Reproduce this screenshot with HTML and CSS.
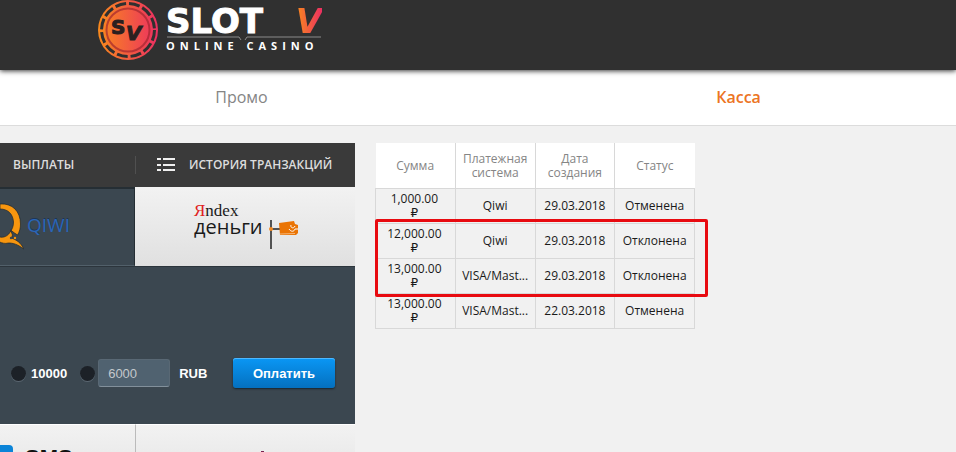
FILE: index.html
```html
<!DOCTYPE html>
<html lang="ru">
<head>
  <meta charset="UTF-8">
  <title>Касса</title>
  <meta name="viewport" content="width=device-width, initial-scale=1.0">
  <link rel="stylesheet" href="styles.css">
</head>
<body>

  <header class="header">
    <a class="logo" href="#">
      <svg class="logo-chip" viewBox="0 0 62 62" width="62" height="62">
        <defs>
          <linearGradient id="chip" x1="0" y1="0" x2="1" y2="0">
            <stop offset="0" stop-color="#f98a1c"/>
            <stop offset="1" stop-color="#ec2f62"/>
          </linearGradient>
        </defs>
        <circle cx="31" cy="30" r="30" fill="url(#chip)"/>
        <circle cx="31" cy="30" r="26.5" fill="none" stroke="#303030" stroke-width="3" stroke-dasharray="10.9 3"/>
        <circle cx="31" cy="30" r="21.5" fill="none" stroke="#a3262f" stroke-opacity="0.7" stroke-width="2"/>
        <text class="chip-letter" x="14" y="34" font-size="20">S</text>
        <text class="chip-letter" x="29" y="40" font-size="20" font-style="italic">V</text>
      </svg>
      <span class="logo-text">
        <span class="logo-name"><span>SLOT</span><span class="logo-v">V</span></span>
        <svg class="logo-line" viewBox="0 0 154 5" height="5">
          <path d="M0 1H72l2 3M154 1H80l-2 3" fill="none" stroke="#8a8a8a"/>
        </svg>
        <span class="logo-sub">ONLINE CASINO</span>
      </span>
    </a>
  </header>

  <nav class="nav">
    <div class="nav-list">
      <a href="#">Промо</a>
      <a class="active" href="#">Касса</a>
    </div>
  </nav>

  <main class="content">
    <section class="cashier">
      <div class="tabs">
        <a class="tab" href="#">ВЫПЛАТЫ</a>
        <a class="tab tab-history" href="#">
          <svg width="18" height="14" viewBox="0 0 18 14">
            <path d="M0 1h4M6 1h12M0 7h4M6 7h12M0 12h4M6 12h12" stroke="#f0f0f0" stroke-width="2"/>
          </svg>
          ИСТОРИЯ ТРАНЗАКЦИЙ
        </a>
      </div>

      <div class="methods">
        <button class="method method-active" type="button">
          <svg width="25" height="48" viewBox="0 0 25 48">
            <path d="M0 1C12 0 20.500 8 20.500 21c0 4-1 8-3 11l-3-2-4-3 2 5-1 3c5 2 10 5 12 11-6-5-11-6-15-6-4 1-6 0-9-1v-5c4 1 8-1 10-4 3-4 4-7 4-11C13 11 8 6 0 6z" fill="#f7960f" stroke="#1d2830" stroke-width="0.700"/>
            <circle cx="11" cy="35" r="1.200" fill="#3b4750"/>
            <circle cx="15" cy="35" r="1.200" fill="#f7960f"/>
          </svg>
          <span class="qiwi">QIWI</span>
        </button>
        <button class="method method-yandex" type="button">
          <span class="yandex">
            <span class="yandex-name"><span class="ya">Я</span>ndex</span>
            <span class="yandex-money">деньги</span>
          </span>
          <svg width="30" height="30" viewBox="0 0 30 30">
            <path d="M3 0v29M3 9h9" fill="none" stroke="#222" stroke-width="1.500"/>
            <circle cx="3" cy="9" r="2" fill="#f08a24"/>
            <path d="M11 3l15-2 1 3 3 1v8l-2 2H12z" fill="#ea7404"/>
            <path d="M12 14l15-.500" stroke="#f6b677"/>
            <path d="M23 5c-1 3 3 4 4 1M21 9c2 3 5 3 6 0h3" fill="none" stroke="#fff"/>
          </svg>
        </button>
      </div>

      <form class="pay-form">
        <input class="radio" type="radio" name="amount" id="amount-fixed">
        <label class="fixed-label" for="amount-fixed">10000</label>
        <input class="radio" type="radio" name="amount" aria-label="Другая сумма">
        <input class="amount" type="text" value="6000" aria-label="Сумма">
        <span class="currency">RUB</span>
        <button class="pay" type="button">Оплатить</button>
      </form>

      <div class="methods methods-next">
        <button class="method method-sms" type="button">
          <span class="sms-icon"></span>
          <span class="sms">SMS</span>
        </button>
        <button class="method method-other" type="button">
          <span class="other-mark"></span>
        </button>
      </div>
    </section>

    <section class="history">
      <table>
        <thead>
          <tr><th>Сумма</th><th>Платежная система</th><th>Дата создания</th><th>Статус</th></tr>
        </thead>
        <tbody>
          <tr><td class="sum">1,000.00 <span class="rub">₽</span></td><td>Qiwi</td><td>29.03.2018</td><td>Отменена</td></tr>
          <tr><td class="sum">12,000.00 <span class="rub">₽</span></td><td>Qiwi</td><td>29.03.2018</td><td>Отклонена</td></tr>
          <tr><td class="sum">13,000.00 <span class="rub">₽</span></td><td>VISA/Mast...</td><td>29.03.2018</td><td>Отклонена</td></tr>
          <tr><td class="sum">13,000.00 <span class="rub">₽</span></td><td>VISA/Mast...</td><td>22.03.2018</td><td>Отменена</td></tr>
        </tbody>
      </table>
      <div class="highlight"></div>
    </section>
  </main>

</body>
</html>
```

FILE: styles.css
```css
* {
  box-sizing: border-box;
}

body {
  margin: 0;
  height: 100vh;
  overflow: hidden;
  background: #f1f1f1;
  font-family: "Open Sans", "Noto Sans", sans-serif;
  font-size: 12px;
}

a {
  text-decoration: none;
}

button {
  border: none;
  padding: 0;
  cursor: pointer;
}

/* header */
.header {
  position: relative;
  height: 70px;
  padding-left: 97px;
  background: #303030;
  box-shadow: 0 1px 5px rgba(0, 0, 0, 0.8);
}

.logo {
  display: inline-flex;
  gap: 7px;
  color: #fff;
}

.logo-text {
  display: flex;
  flex-direction: column;
  width: 156px;
  padding-top: 7px;
}

.chip-letter {
  font-family: "DejaVu Sans", sans-serif;
  font-weight: bold;
  fill: #2b2020;
  stroke: #2b2020;
}

.logo-name {
  display: flex;
  justify-content: space-between;
  font-family: "DejaVu Sans", sans-serif;
  font-size: 34px;
  font-weight: bold;
  line-height: 29px;
  -webkit-text-stroke: 1px #fff;
}

.logo-v {
  font-style: italic;
  background: linear-gradient(90deg, #f98a1c, #ec2f62);
  -webkit-background-clip: text;
  background-clip: text;
  color: transparent;
  -webkit-text-stroke: 0;
}

.logo-sub {
  font-size: 11px;
  font-weight: bold;
  line-height: 10px;
  letter-spacing: 5px;
  white-space: nowrap;
}

/* navigation */
.nav {
  height: 56px;
  overflow: hidden;
  background: #fff;
  border-bottom: 1px solid #dcdcdc;
}

.nav-list {
  display: flex;
  margin: 0 -31px 0 -7px;
}

.nav-list a {
  flex: 1;
  text-align: center;
  font-size: 16px;
  line-height: 54px;
  color: #858585;
}

.nav-list .active {
  color: #ec7423;
  font-weight: 600;
}

.content {
  display: flex;
  align-items: flex-start;
  gap: 20px;
  padding-top: 17px;
}

/* cashier */
.cashier {
  width: 355px;
  background: #3b4750;
}

.tabs {
  display: flex;
  align-items: center;
  height: 44px;
  background: #3a3a3a;
}

.tab {
  width: 135px;
  padding-left: 13px;
  font-weight: 600;
  line-height: 18px;
  color: #ddd;
}

.tab-history {
  flex: 1;
  display: flex;
  align-items: center;
  gap: 14px;
  padding-left: 21px;
  border-left: 1px solid #505050;
  white-space: nowrap;
}

.methods {
  display: flex;
  height: 79px;
}

.method {
  display: flex;
  align-items: center;
  width: 135px;
  background: linear-gradient(#f2f2f2, #e0e0e0);
}

.method-active {
  gap: 2px;
  background: #3b4750;
  border-top: 2px solid #252e34;
  border-right: 1px solid #252e34;
  border-bottom: 1px solid #52606a;
}

.qiwi {
  padding-bottom: 4px;
  font-family: "Open Sans", sans-serif;
  font-size: 19px;
  line-height: 24px;
  color: #2a66b8;
  text-shadow: 0 -1px 0 #1d3555;
}

.method-yandex {
  flex: 1;
  padding: 0 0 16px 59px;
  gap: 5px;
  color: #1a1a1a;
}

.method-yandex svg {
  margin-top: 32px;
}

.yandex {
  display: flex;
  flex-direction: column;
  text-align: left;
}

.yandex-name {
  font-family: "Liberation Serif", serif;
  font-size: 17px;
  line-height: 16px;
}

.ya {
  color: #e02020;
}

.yandex-money {
  font-family: "Open Sans", sans-serif;
  font-size: 20px;
  font-weight: 500;
  line-height: 16px;
}

.pay-form {
  display: flex;
  align-items: center;
  height: 158px;
  padding: 55px 20px 0 11px;
  border-top: 1px solid #2c353c;
  font-family: "Liberation Sans", Arial, sans-serif;
  font-size: 13px;
  font-weight: bold;
  color: #fff;
}

.radio {
  appearance: none;
  width: 15px;
  height: 15px;
  margin: 0;
  border-radius: 50%;
  background: #1c2127;
  box-shadow: 0 1px 0 #5a6670;
}

.fixed-label {
  margin: 0 13px 0 5px;
}

.amount {
  width: 72px;
  height: 28px;
  margin: 0 9px 0 3px;
  padding: 0 9px;
  border: 1px solid #596874;
  border-bottom-color: #82909b;
  border-radius: 3px;
  background: #506270;
  font-family: inherit;
  font-size: 13px;
  color: #c3c8cc;
}

.pay {
  width: 102px;
  height: 30px;
  margin-left: auto;
  border-radius: 3px;
  background: linear-gradient(#0a97f5, #0470bf);
  box-shadow: inset 0 1px 0 #4db8ff, 0 1px 2px #16242e;
  font-family: inherit;
  font-size: 13px;
  font-weight: bold;
  color: #fff;
}

.methods-next .method {
  align-items: flex-start;
  border-top: 1px solid #fff;
}

.method-sms {
  gap: 12px;
  padding-top: 20px;
}

.sms-icon {
  width: 13px;
  height: 30px;
  border-radius: 0 4px 0 0;
  background: #0b84d8;
}

.sms {
  font-family: "Liberation Sans", Arial, sans-serif;
  font-size: 22px;
  font-weight: bold;
  color: #111;
}

.methods-next .method-other {
  flex: 1;
  padding: 26px 0 0 125px;
  border-left: 1px solid #bbb;
}

.other-mark {
  width: 3px;
  height: 12px;
  background: #7a2350;
}

/* history */
.history {
  position: relative;
  width: 320px;
}

table {
  width: 100%;
  table-layout: fixed;
  border-collapse: collapse;
  text-align: center;
  line-height: 14px;
}

th {
  height: 45px;
  padding: 2px 5px 0;
  background: #fff;
  border-left: 1px solid #d8d8d8;
  font-weight: normal;
  color: #858585;
}

th:first-child {
  border-left: none;
}

td {
  height: 35px;
  padding: 0 5px;
  border: 1px solid #d8d8d8;
  color: #1a1a1a;
}

td.sum {
  padding: 1px 7px 0 5px;
}

.rub {
  display: block;
  font-family: "DejaVu Sans", sans-serif;
  font-size: 12px;
  line-height: 14px;
}

/* marks the declined payouts */
.highlight {
  position: absolute;
  top: 76px;
  left: 0;
  right: -13px;
  height: 78px;
  border: 3px solid #e80a10;
  border-radius: 2px;
}
```
